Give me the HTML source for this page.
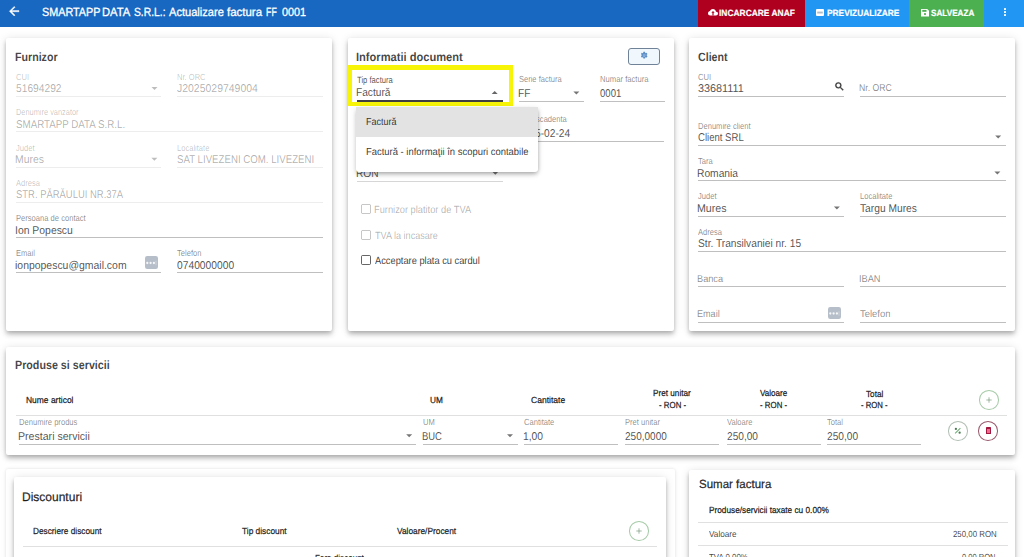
<!DOCTYPE html>
<html><head><meta charset="utf-8"><title>Actualizare factura</title>
<style>
html,body{margin:0;padding:0;width:1024px;height:557px;overflow:hidden;background:#fff;position:relative}
.t{position:absolute;font-family:'Liberation Sans', sans-serif;line-height:1;white-space:pre;text-rendering:geometricPrecision}
svg{position:absolute;overflow:visible}
</style></head><body>
<div style="position:absolute;left:0px;top:0px;width:1024px;height:27px;background:#1867c0"></div>
<div style="position:absolute;left:698px;top:0px;width:107px;height:27px;background:#b00020"></div>
<div style="position:absolute;left:805px;top:0px;width:104px;height:27px;background:#2196f3"></div>
<div style="position:absolute;left:909px;top:0px;width:75px;height:27px;background:#4caf50"></div>
<div style="position:absolute;left:984px;top:0px;width:40px;height:27px;background:#2196f3"></div>
<svg style="left:6.9px;top:4.2px" width="14.4" height="14.4" viewBox="0 0 24 24"><path fill="#fff" stroke="#fff" stroke-width=".7" d="M20 11H7.83l5.59-5.59L12 4l-8 8 8 8 1.41-1.41L7.83 13H20v-2z"/></svg>
<div class="t" style="left:41.80px;top:7px;font-size:11.9px;font-weight:400;-webkit-text-stroke-width:0.3px;color:#fff;transform:scaleX(0.9078);transform-origin:0 0;">SMARTAPP</div>
<div class="t" style="left:102.46px;top:7px;font-size:11.9px;font-weight:400;-webkit-text-stroke-width:0.3px;color:#fff;transform:scaleX(0.9414);transform-origin:0 0;">DATA</div>
<div class="t" style="left:133.70px;top:7px;font-size:11.9px;font-weight:400;-webkit-text-stroke-width:0.3px;color:#fff;transform:scaleX(0.8667);transform-origin:0 0;">S.R.L.:</div>
<div class="t" style="left:168.80px;top:7px;font-size:11.9px;font-weight:400;-webkit-text-stroke-width:0.3px;color:#fff;transform:scaleX(0.9322);transform-origin:0 0;">Actualizare</div>
<div class="t" style="left:227.00px;top:7px;font-size:11.9px;font-weight:400;-webkit-text-stroke-width:0.3px;color:#fff;transform:scaleX(0.9649);transform-origin:0 0;">factura</div>
<div class="t" style="left:266.46px;top:7px;font-size:11.9px;font-weight:400;-webkit-text-stroke-width:0.3px;color:#fff;transform:scaleX(0.7429);transform-origin:0 0;">FF</div>
<div class="t" style="left:282.20px;top:7px;font-size:11.9px;font-weight:400;-webkit-text-stroke-width:0.3px;color:#fff;transform:scaleX(0.9115);transform-origin:0 0;">0001</div>
<svg style="left:708px;top:9px" width="10" height="7" viewBox="0 0 10 7"><path d="M8.1 2.9C7.8 1.3 6.5 0 4.9 0 3.6 0 2.5.8 2 1.9.9 2 0 3 0 4.2 0 5.5 1 6.5 2.3 6.5H8c1.1 0 2-.9 2-2 0-1-.8-1.8-1.9-1.6z" fill="#fff"/><path d="M5 2L3.3 3.8h1.1v2.7h1.2V3.8h1.1z" fill="#b00020"/></svg>
<div class="t" style="left:719.00px;top:9px;font-size:9.0px;font-weight:700;-webkit-text-stroke-width:0.2px;color:#fff;transform:scaleX(0.9346);transform-origin:0 0;">INCARCARE ANAF</div>
<svg style="left:816px;top:9px" width="8" height="7" viewBox="0 0 8 7"><rect width="8" height="7" rx="1" fill="#fff"/><rect x="1.2" y="2.6" width="5.6" height="1.9" fill="#6d86a0" opacity=".55"/></svg>
<div class="t" style="left:826.50px;top:9px;font-size:9.0px;font-weight:700;-webkit-text-stroke-width:0.2px;color:#fff;transform:scaleX(0.9282);transform-origin:0 0;">PREVIZUALIZARE</div>
<svg style="left:920.5px;top:9px" width="8" height="7.5" viewBox="0 0 8 7.5"><path d="M0 0h6.2L8 1.8V7.5H0z" fill="#fff"/><rect x="1.3" y=".9" width="4.2" height="1.9" fill="#4caf50"/><circle cx="4" cy="5.1" r="1.1" fill="#4caf50"/></svg>
<div class="t" style="left:930.50px;top:9px;font-size:9.0px;font-weight:700;-webkit-text-stroke-width:0.2px;color:#fff;transform:scaleX(0.9062);transform-origin:0 0;">SALVEAZA</div>
<div style="position:absolute;left:1004px;top:8.2px;width:1.7px;height:1.7px;background:#fff;border-radius:50%"></div>
<div style="position:absolute;left:1004px;top:11.2px;width:1.7px;height:1.7px;background:#fff;border-radius:50%"></div>
<div style="position:absolute;left:1004px;top:14.2px;width:1.7px;height:1.7px;background:#fff;border-radius:50%"></div>
<div style="position:absolute;left:6px;top:38px;width:326px;height:293px;box-shadow:0 2px 4px -1px rgba(0,0,0,.2),0 4px 5px 0 rgba(0,0,0,.14),0 1px 10px 0 rgba(0,0,0,.12);background:#fff;border-radius:2px"></div>
<div style="position:absolute;left:348px;top:38px;width:326px;height:293px;box-shadow:0 2px 4px -1px rgba(0,0,0,.2),0 4px 5px 0 rgba(0,0,0,.14),0 1px 10px 0 rgba(0,0,0,.12);background:#fff;border-radius:2px"></div>
<div style="position:absolute;left:689px;top:38px;width:326px;height:293px;box-shadow:0 2px 4px -1px rgba(0,0,0,.2),0 4px 5px 0 rgba(0,0,0,.14),0 1px 10px 0 rgba(0,0,0,.12);background:#fff;border-radius:2px"></div>
<div style="position:absolute;left:6px;top:347px;width:1009px;height:107.5px;box-shadow:0 2px 4px -1px rgba(0,0,0,.2),0 4px 5px 0 rgba(0,0,0,.14),0 1px 10px 0 rgba(0,0,0,.12);background:#fff;border-radius:2px"></div>
<div style="position:absolute;left:6px;top:469px;width:669px;height:120px;background:#fff;border-radius:2px;box-shadow:0 0 3px rgba(0,0,0,.10),0 1px 6px rgba(0,0,0,.05)"></div>
<div style="position:absolute;left:14px;top:477px;width:652px;height:120px;box-shadow:0 2px 4px -1px rgba(0,0,0,.2),0 4px 5px 0 rgba(0,0,0,.14),0 1px 10px 0 rgba(0,0,0,.12);background:#fff;border-radius:2px"></div>
<div style="position:absolute;left:689px;top:470px;width:326px;height:120px;box-shadow:0 2px 4px -1px rgba(0,0,0,.2),0 4px 5px 0 rgba(0,0,0,.14),0 1px 10px 0 rgba(0,0,0,.12);background:#fff;border-radius:2px"></div>
<div class="t" style="left:14.91px;top:51px;font-size:12.0px;font-weight:700;color:rgba(0,0,0,.74);transform:scaleX(0.8872);transform-origin:0 0;">Furnizor</div>
<div class="t" style="left:15.80px;top:73px;font-size:8.8px;font-weight:400;color:rgba(0,0,0,.24);transform:scaleX(0.8600);transform-origin:0 0;">CUI</div>
<div class="t" style="left:15.80px;top:84px;font-size:11.3px;font-weight:400;color:rgba(0,0,0,.32);transform:scaleX(0.9060);transform-origin:0 0;">51694292</div>
<div style="position:absolute;left:16px;top:96px;width:145px;height:1px;background:rgba(0,0,0,.07)"></div>
<svg style="left:0;top:0" width="1" height="1"><path d="M151.5 86.9L157.5 86.9L154.5 89.9Z" fill="rgba(0,0,0,.26)"/></svg>
<div class="t" style="left:176.70px;top:73px;font-size:8.8px;font-weight:400;color:rgba(0,0,0,.24);transform:scaleX(0.8600);transform-origin:0 0;">Nr. ORC</div>
<div class="t" style="left:176.70px;top:84px;font-size:11.3px;font-weight:400;color:rgba(0,0,0,.32);transform:scaleX(0.9264);transform-origin:0 0;">J2025029749004</div>
<div style="position:absolute;left:177px;top:96px;width:146px;height:1px;background:rgba(0,0,0,.07)"></div>
<div class="t" style="left:15.80px;top:108px;font-size:8.8px;font-weight:400;color:rgba(0,0,0,.24);transform:scaleX(0.8413);transform-origin:0 0;">Denumire vanzator</div>
<div class="t" style="left:15.80px;top:120px;font-size:11.3px;font-weight:400;color:rgba(0,0,0,.32);transform:scaleX(0.8635);transform-origin:0 0;">SMARTAPP DATA S.R.L.</div>
<div style="position:absolute;left:16px;top:131px;width:307px;height:1px;background:rgba(0,0,0,.07)"></div>
<div class="t" style="left:15.80px;top:144px;font-size:8.8px;font-weight:400;color:rgba(0,0,0,.24);transform:scaleX(0.8600);transform-origin:0 0;">Judet</div>
<div class="t" style="left:14.88px;top:155px;font-size:11.3px;font-weight:400;color:rgba(0,0,0,.32);transform:scaleX(0.9233);transform-origin:0 0;">Mures</div>
<div style="position:absolute;left:16px;top:167px;width:145px;height:1px;background:rgba(0,0,0,.07)"></div>
<svg style="left:0;top:0" width="1" height="1"><path d="M151.4 157.8L157.4 157.8L154.4 160.8Z" fill="rgba(0,0,0,.26)"/></svg>
<div class="t" style="left:176.70px;top:144px;font-size:8.8px;font-weight:400;color:rgba(0,0,0,.24);transform:scaleX(0.8600);transform-origin:0 0;">Localitate</div>
<div class="t" style="left:176.70px;top:155px;font-size:11.3px;font-weight:400;color:rgba(0,0,0,.32);transform:scaleX(0.8562);transform-origin:0 0;">SAT LIVEZENI COM. LIVEZENI</div>
<div style="position:absolute;left:177px;top:167px;width:146px;height:1px;background:rgba(0,0,0,.07)"></div>
<div class="t" style="left:15.80px;top:179px;font-size:8.8px;font-weight:400;color:rgba(0,0,0,.24);transform:scaleX(0.8600);transform-origin:0 0;">Adresa</div>
<div class="t" style="left:15.80px;top:190px;font-size:11.3px;font-weight:400;color:rgba(0,0,0,.32);transform:scaleX(0.8359);transform-origin:0 0;">STR. PĂRĂULUI NR.37A</div>
<div style="position:absolute;left:16px;top:202px;width:307px;height:1px;background:rgba(0,0,0,.07)"></div>
<div class="t" style="left:15.80px;top:214px;font-size:8.8px;font-weight:400;color:rgba(0,0,0,.47);transform:scaleX(0.8630);transform-origin:0 0;">Persoana de contact</div>
<div class="t" style="left:14.88px;top:226px;font-size:11.3px;font-weight:400;color:rgba(0,0,0,.70);transform:scaleX(0.9213);transform-origin:0 0;">Ion Popescu</div>
<div style="position:absolute;left:16px;top:237px;width:307px;height:1px;background:rgba(0,0,0,.25)"></div>
<div class="t" style="left:15.80px;top:249px;font-size:8.8px;font-weight:400;color:rgba(0,0,0,.47);transform:scaleX(0.8600);transform-origin:0 0;">Email</div>
<div class="t" style="left:14.88px;top:261px;font-size:11.3px;font-weight:400;color:rgba(0,0,0,.70);transform:scaleX(0.9244);transform-origin:0 0;">ionpopescu@gmail.com</div>
<div style="position:absolute;left:16px;top:272px;width:145px;height:1px;background:rgba(0,0,0,.25)"></div>
<div class="t" style="left:176.70px;top:249px;font-size:8.8px;font-weight:400;color:rgba(0,0,0,.47);transform:scaleX(0.8600);transform-origin:0 0;">Telefon</div>
<div class="t" style="left:176.70px;top:261px;font-size:11.3px;font-weight:400;color:rgba(0,0,0,.70);transform:scaleX(0.9095);transform-origin:0 0;">0740000000</div>
<div style="position:absolute;left:177px;top:272px;width:146px;height:1px;background:rgba(0,0,0,.25)"></div>
<svg style="left:145px;top:256.4px" width="13" height="13" viewBox="0 0 13 13"><rect width="13" height="13" rx="2.2" fill="#b6bec9"/><circle cx="2.3" cy="7" r="1.15" fill="#f4f6f8"/><circle cx="5.6" cy="7" r="1.15" fill="#f4f6f8"/><circle cx="8.9" cy="7" r="1.15" fill="#f4f6f8"/><rect x="10.7" y="4.8" width=".6" height="4.4" fill="#dde2e8"/></svg>
<div class="t" style="left:356.07px;top:51px;font-size:12.0px;font-weight:700;color:rgba(0,0,0,.74);transform:scaleX(0.9254);transform-origin:0 0;">Informatii document</div>
<div style="position:absolute;left:628.3px;top:48px;width:31.4px;height:17.4px;border:1.2px solid #6f8297;border-radius:3px;box-sizing:border-box;background:#f1f8fd"></div>
<svg style="left:639.8px;top:51.4px" width="8.4" height="8.4" viewBox="0 0 24 24"><circle cx="12" cy="12" r="4" fill="#7da7d6"/><path fill="#5d8ec6" d="M19.14 12.94c.04-.3.06-.61.06-.94 0-.32-.02-.64-.07-.94l2.03-1.58a.49.49 0 0 0 .12-.61l-1.92-3.32a.488.488 0 0 0-.59-.22l-2.39.96c-.5-.38-1.03-.7-1.62-.94l-.36-2.54a.484.484 0 0 0-.48-.41h-3.84c-.24 0-.43.17-.47.41l-.36 2.54c-.59.24-1.13.57-1.62.94l-2.39-.96c-.22-.08-.47 0-.59.22L2.74 8.87c-.12.21-.08.47.12.61l2.03 1.58c-.05.3-.09.63-.09.94s.02.64.07.94l-2.03 1.58a.49.49 0 0 0-.12.61l1.92 3.32c.12.22.37.29.59.22l2.39-.96c.5.38 1.03.7 1.62.94l.36 2.54c.05.24.24.41.48.41h3.84c.24 0 .44-.17.47-.41l.36-2.54c.59-.24 1.13-.56 1.62-.94l2.39.96c.22.08.47 0 .59-.22l1.92-3.32c.12-.22.07-.47-.12-.61l-2.01-1.58zM12 15.6c-1.98 0-3.6-1.62-3.6-3.6s1.62-3.6 3.6-3.6 3.6 1.62 3.6 3.6-1.62 3.6-3.6 3.6z"/></svg>
<div class="t" style="left:357.00px;top:115px;font-size:8.8px;font-weight:400;color:rgba(0,0,0,.47);transform:scaleX(0.8600);transform-origin:0 0;">Data emitere</div>
<div class="t" style="left:357.00px;top:129px;font-size:11.3px;font-weight:400;color:rgba(0,0,0,.70);transform:scaleX(0.9000);transform-origin:0 0;">2025-02-10</div>
<div style="position:absolute;left:357px;top:141px;width:146px;height:1px;background:rgba(0,0,0,.25)"></div>
<div class="t" style="left:518.40px;top:115px;font-size:8.8px;font-weight:400;color:rgba(0,0,0,.47);transform:scaleX(0.8600);transform-origin:0 0;">Data scadenta</div>
<div class="t" style="left:518.40px;top:129px;font-size:11.3px;font-weight:400;color:rgba(0,0,0,.70);transform:scaleX(0.9018);transform-origin:0 0;">2025-02-24</div>
<div style="position:absolute;left:518px;top:141px;width:146px;height:1px;background:rgba(0,0,0,.25)"></div>
<div class="t" style="left:357.00px;top:156px;font-size:8.8px;font-weight:400;color:rgba(0,0,0,.47);transform:scaleX(0.8600);transform-origin:0 0;">Moneda</div>
<div class="t" style="left:356.10px;top:169px;font-size:11.3px;font-weight:400;color:rgba(0,0,0,.70);transform:scaleX(0.9000);transform-origin:0 0;">RON</div>
<div style="position:absolute;left:357px;top:181px;width:146px;height:1px;background:rgba(0,0,0,.16)"></div>
<svg style="left:0;top:0" width="1" height="1"><path d="M492.3 171.7L498.3 171.7L495.3 174.7Z" fill="rgba(0,0,0,.54)"/></svg>
<div class="t" style="left:518.60px;top:75px;font-size:8.8px;font-weight:400;color:rgba(0,0,0,.47);transform:scaleX(0.8540);transform-origin:0 0;">Serie factura</div>
<div class="t" style="left:517.70px;top:89px;font-size:11.3px;font-weight:400;color:rgba(0,0,0,.70);transform:scaleX(0.9000);transform-origin:0 0;">FF</div>
<div style="position:absolute;left:519px;top:101px;width:65px;height:1px;background:rgba(0,0,0,.25)"></div>
<svg style="left:0;top:0" width="1" height="1"><path d="M573.4 91.4L579.4 91.4L576.4 94.4Z" fill="rgba(0,0,0,.54)"/></svg>
<div class="t" style="left:599.80px;top:75px;font-size:8.8px;font-weight:400;color:rgba(0,0,0,.47);transform:scaleX(0.8714);transform-origin:0 0;">Numar factura</div>
<div class="t" style="left:599.80px;top:89px;font-size:11.3px;font-weight:400;color:rgba(0,0,0,.70);transform:scaleX(0.8480);transform-origin:0 0;">0001</div>
<div style="position:absolute;left:600px;top:101px;width:65px;height:1px;background:rgba(0,0,0,.25)"></div>
<div class="t" style="left:357.00px;top:76px;font-size:9.2px;font-weight:400;color:rgba(0,0,0,.7);transform:scaleX(0.8326);transform-origin:0 0;">Tip factura</div>
<div class="t" style="left:356.10px;top:88px;font-size:11.3px;font-weight:400;color:rgba(0,0,0,.70);transform:scaleX(0.9000);transform-origin:0 0;">Factură</div>
<div style="position:absolute;left:357px;top:100px;width:146px;height:2px;background:rgba(0,0,0,.75)"></div>
<svg style="left:0;top:0" width="1" height="1"><path d="M491.7 93.9L497.7 93.9L494.7 90.9Z" fill="rgba(0,0,0,.6)"/></svg>
<div style="position:absolute;left:347.5px;top:65px;width:165.5px;height:41.3px;border:4.4px solid #f7f408;border-top-width:5.2px;box-sizing:border-box"></div>
<div style="position:absolute;left:360.8px;top:204.3px;width:10px;height:10px;border:1.4px solid rgba(0,0,0,.22);border-radius:1.5px;box-sizing:border-box"></div>
<div class="t" style="left:373.71px;top:206px;font-size:10.4px;font-weight:400;color:rgba(0,0,0,.3);transform:scaleX(0.8926);transform-origin:0 0;">Furnizor platitor de TVA</div>
<div style="position:absolute;left:360.8px;top:229.7px;width:10px;height:10px;border:1.4px solid rgba(0,0,0,.22);border-radius:1.5px;box-sizing:border-box"></div>
<div class="t" style="left:374.60px;top:232px;font-size:10.4px;font-weight:400;color:rgba(0,0,0,.3);transform:scaleX(0.8736);transform-origin:0 0;">TVA la incasare</div>
<div style="position:absolute;left:360.8px;top:255.1px;width:10px;height:10px;border:1.4px solid rgba(0,0,0,.6);border-radius:1.5px;box-sizing:border-box"></div>
<div class="t" style="left:374.60px;top:257px;font-size:10.4px;font-weight:400;color:rgba(0,0,0,.78);transform:scaleX(0.8940);transform-origin:0 0;">Acceptare plata cu cardul</div>
<div style="position:absolute;left:356.1px;top:106.7px;width:182.3px;height:65.6px;background:#fff;border-radius:0 0 3px 3px;box-shadow:0 3px 4px -1px rgba(0,0,0,.22),0 2px 6px 0 rgba(0,0,0,.12),2px 1px 4px -2px rgba(0,0,0,.15)"></div>
<div style="position:absolute;left:356.1px;top:106.7px;width:182.3px;height:30px;background:#e3e3e3"></div>
<div class="t" style="left:365.62px;top:118px;font-size:10.2px;font-weight:400;color:rgba(0,0,0,.8);transform:scaleX(0.8824);transform-origin:0 0;">Factură</div>
<div class="t" style="left:365.57px;top:148px;font-size:10.2px;font-weight:400;color:rgba(0,0,0,.8);transform:scaleX(0.9259);transform-origin:0 0;">Factură - informaţii în scopuri contabile</div>
<div class="t" style="left:698.20px;top:51px;font-size:12.0px;font-weight:700;color:rgba(0,0,0,.74);transform:scaleX(0.8879);transform-origin:0 0;">Client</div>
<div class="t" style="left:698.20px;top:73px;font-size:8.8px;font-weight:400;color:rgba(0,0,0,.47);transform:scaleX(0.8600);transform-origin:0 0;">CUI</div>
<div class="t" style="left:698.20px;top:84px;font-size:11.3px;font-weight:400;color:rgba(0,0,0,.70);transform:scaleX(0.9596);transform-origin:0 0;">33681111</div>
<div style="position:absolute;left:698px;top:96px;width:146px;height:1px;background:rgba(0,0,0,.25)"></div>
<svg style="left:833.5px;top:80.5px" width="11" height="11" viewBox="0 0 24 24"><path fill="rgba(0,0,0,.72)" stroke="rgba(0,0,0,.72)" stroke-width="1" d="M15.5 14h-.79l-.28-.27A6.471 6.471 0 0 0 16 9.5 6.5 6.5 0 1 0 9.5 16c1.61 0 3.09-.59 4.23-1.57l.27.28v.79l5 4.99L20.49 19l-4.99-5zm-6 0C7.01 14 5 11.99 5 9.5S7.01 5 9.5 5 14 7.01 14 9.5 11.99 14 9.5 14z"/></svg>
<div class="t" style="left:858.74px;top:84px;font-size:10.0px;font-weight:400;color:rgba(0,0,0,.47);transform:scaleX(0.8639);transform-origin:0 0;">Nr. ORC</div>
<div style="position:absolute;left:860px;top:96px;width:146px;height:1px;background:rgba(0,0,0,.25)"></div>
<div class="t" style="left:698.20px;top:122px;font-size:8.8px;font-weight:400;color:rgba(0,0,0,.47);transform:scaleX(0.8600);transform-origin:0 0;">Denumire client</div>
<div class="t" style="left:698.20px;top:133px;font-size:11.3px;font-weight:400;color:rgba(0,0,0,.70);transform:scaleX(0.8463);transform-origin:0 0;">Client SRL</div>
<div style="position:absolute;left:698px;top:145px;width:308px;height:1px;background:rgba(0,0,0,.25)"></div>
<svg style="left:0;top:0" width="1" height="1"><path d="M995.2 135.5L1001.2 135.5L998.2 138.5Z" fill="rgba(0,0,0,.54)"/></svg>
<div class="t" style="left:698.20px;top:157px;font-size:8.8px;font-weight:400;color:rgba(0,0,0,.47);transform:scaleX(0.8600);transform-origin:0 0;">Tara</div>
<div class="t" style="left:697.29px;top:169px;font-size:11.3px;font-weight:400;color:rgba(0,0,0,.70);transform:scaleX(0.9068);transform-origin:0 0;">Romania</div>
<div style="position:absolute;left:698px;top:180px;width:308px;height:1px;background:rgba(0,0,0,.25)"></div>
<svg style="left:0;top:0" width="1" height="1"><path d="M994.4 171.5L1000.4 171.5L997.4 174.5Z" fill="rgba(0,0,0,.54)"/></svg>
<div class="t" style="left:698.20px;top:192px;font-size:8.8px;font-weight:400;color:rgba(0,0,0,.47);transform:scaleX(0.8600);transform-origin:0 0;">Judet</div>
<div class="t" style="left:697.26px;top:204px;font-size:11.3px;font-weight:400;color:rgba(0,0,0,.70);transform:scaleX(0.9400);transform-origin:0 0;">Mures</div>
<div style="position:absolute;left:698px;top:216px;width:146px;height:1px;background:rgba(0,0,0,.25)"></div>
<svg style="left:0;top:0" width="1" height="1"><path d="M833.9 206.5L839.9 206.5L836.9 209.5Z" fill="rgba(0,0,0,.54)"/></svg>
<div class="t" style="left:859.70px;top:192px;font-size:8.8px;font-weight:400;color:rgba(0,0,0,.47);transform:scaleX(0.8600);transform-origin:0 0;">Localitate</div>
<div class="t" style="left:859.70px;top:204px;font-size:11.3px;font-weight:400;color:rgba(0,0,0,.70);transform:scaleX(0.9063);transform-origin:0 0;">Targu Mures</div>
<div style="position:absolute;left:860px;top:216px;width:146px;height:1px;background:rgba(0,0,0,.25)"></div>
<div class="t" style="left:698.20px;top:228px;font-size:8.8px;font-weight:400;color:rgba(0,0,0,.47);transform:scaleX(0.8600);transform-origin:0 0;">Adresa</div>
<div class="t" style="left:698.20px;top:239px;font-size:11.3px;font-weight:400;color:rgba(0,0,0,.70);transform:scaleX(0.9018);transform-origin:0 0;">Str. Transilvaniei nr. 15</div>
<div style="position:absolute;left:698px;top:251px;width:308px;height:1px;background:rgba(0,0,0,.25)"></div>
<div class="t" style="left:697.28px;top:275px;font-size:10.0px;font-weight:400;color:rgba(0,0,0,.47);transform:scaleX(0.9185);transform-origin:0 0;">Banca</div>
<div style="position:absolute;left:698px;top:286px;width:146px;height:1px;background:rgba(0,0,0,.25)"></div>
<div class="t" style="left:858.78px;top:275px;font-size:10.0px;font-weight:400;color:rgba(0,0,0,.47);transform:scaleX(0.9227);transform-origin:0 0;">IBAN</div>
<div style="position:absolute;left:860px;top:286px;width:146px;height:1px;background:rgba(0,0,0,.25)"></div>
<div class="t" style="left:697.29px;top:310px;font-size:10.0px;font-weight:400;color:rgba(0,0,0,.47);transform:scaleX(0.9083);transform-origin:0 0;">Email</div>
<div style="position:absolute;left:698px;top:322px;width:146px;height:1px;background:rgba(0,0,0,.25)"></div>
<div class="t" style="left:859.70px;top:310px;font-size:10.0px;font-weight:400;color:rgba(0,0,0,.47);transform:scaleX(0.9469);transform-origin:0 0;">Telefon</div>
<div style="position:absolute;left:860px;top:322px;width:146px;height:1px;background:rgba(0,0,0,.25)"></div>
<svg style="left:827.8px;top:306.6px" width="13" height="12" viewBox="0 0 13 12"><rect width="13" height="12" rx="2.2" fill="#b6bec9"/><circle cx="2.3" cy="6.5" r="1.15" fill="#f4f6f8"/><circle cx="5.6" cy="6.5" r="1.15" fill="#f4f6f8"/><circle cx="8.9" cy="6.5" r="1.15" fill="#f4f6f8"/><rect x="10.7" y="4.3" width=".6" height="4.4" fill="#dde2e8"/></svg>
<div class="t" style="left:15.31px;top:359px;font-size:12.0px;font-weight:700;color:rgba(0,0,0,.74);transform:scaleX(0.8933);transform-origin:0 0;">Produse si servicii</div>
<div class="t" style="left:25.80px;top:396px;font-size:8.8px;font-weight:400;-webkit-text-stroke-width:0.3px;color:rgba(0,0,0,.82);transform:scaleX(0.9612);transform-origin:0 0;">Nume articol</div>
<div class="t" style="left:429.80px;top:396px;font-size:8.8px;font-weight:400;-webkit-text-stroke-width:0.3px;color:rgba(0,0,0,.82);transform:scaleX(0.9385);transform-origin:0 0;">UM</div>
<div class="t" style="left:530.60px;top:396px;font-size:8.8px;font-weight:400;-webkit-text-stroke-width:0.3px;color:rgba(0,0,0,.82);transform:scaleX(0.9714);transform-origin:0 0;">Cantitate</div>
<div class="t" style="left:653.30px;top:389px;font-size:8.8px;font-weight:400;-webkit-text-stroke-width:0.3px;color:rgba(0,0,0,.82);transform:scaleX(0.9317);transform-origin:0 0;">Pret unitar</div>
<div class="t" style="left:658.70px;top:401px;font-size:8.8px;font-weight:400;-webkit-text-stroke-width:0.3px;color:rgba(0,0,0,.82);transform:scaleX(0.8967);transform-origin:0 0;">- RON -</div>
<div class="t" style="left:760.00px;top:389px;font-size:8.8px;font-weight:400;-webkit-text-stroke-width:0.3px;color:rgba(0,0,0,.82);transform:scaleX(0.9200);transform-origin:0 0;">Valoare</div>
<div class="t" style="left:760.30px;top:401px;font-size:8.8px;font-weight:400;-webkit-text-stroke-width:0.3px;color:rgba(0,0,0,.82);transform:scaleX(0.8967);transform-origin:0 0;">- RON -</div>
<div class="t" style="left:866.00px;top:390px;font-size:8.8px;font-weight:400;-webkit-text-stroke-width:0.3px;color:rgba(0,0,0,.82);transform:scaleX(0.9316);transform-origin:0 0;">Total</div>
<div class="t" style="left:861.20px;top:401px;font-size:8.8px;font-weight:400;-webkit-text-stroke-width:0.3px;color:rgba(0,0,0,.82);transform:scaleX(0.8800);transform-origin:0 0;">- RON -</div>
<div style="position:absolute;left:16px;top:415px;width:991px;height:1px;background:rgba(0,0,0,.12)"></div>
<div class="t" style="left:18.60px;top:418px;font-size:8.8px;font-weight:400;color:rgba(0,0,0,.47);transform:scaleX(0.8657);transform-origin:0 0;">Denumire produs</div>
<div class="t" style="left:17.66px;top:432px;font-size:11.3px;font-weight:400;color:rgba(0,0,0,.70);transform:scaleX(0.9373);transform-origin:0 0;">Prestari servicii</div>
<div style="position:absolute;left:19px;top:444px;width:397px;height:1px;background:rgba(0,0,0,.25)"></div>
<svg style="left:0;top:0" width="1" height="1"><path d="M406.2 434.3L412.2 434.3L409.2 437.3Z" fill="rgba(0,0,0,.54)"/></svg>
<div class="t" style="left:422.80px;top:418px;font-size:8.8px;font-weight:400;color:rgba(0,0,0,.47);transform:scaleX(0.8600);transform-origin:0 0;">UM</div>
<div class="t" style="left:421.97px;top:432px;font-size:11.3px;font-weight:400;color:rgba(0,0,0,.70);transform:scaleX(0.8348);transform-origin:0 0;">BUC</div>
<div style="position:absolute;left:423px;top:444px;width:95px;height:1px;background:rgba(0,0,0,.25)"></div>
<svg style="left:0;top:0" width="1" height="1"><path d="M507.0 434.3L513.0 434.3L510.0 437.3Z" fill="rgba(0,0,0,.54)"/></svg>
<div class="t" style="left:524.30px;top:418px;font-size:8.8px;font-weight:400;color:rgba(0,0,0,.47);transform:scaleX(0.8600);transform-origin:0 0;">Cantitate</div>
<div class="t" style="left:523.39px;top:432px;font-size:11.3px;font-weight:400;color:rgba(0,0,0,.70);transform:scaleX(0.9143);transform-origin:0 0;">1,00</div>
<div style="position:absolute;left:524px;top:444px;width:94px;height:1px;background:rgba(0,0,0,.25)"></div>
<div class="t" style="left:625.20px;top:418px;font-size:8.8px;font-weight:400;color:rgba(0,0,0,.47);transform:scaleX(0.8600);transform-origin:0 0;">Pret unitar</div>
<div class="t" style="left:625.20px;top:432px;font-size:11.3px;font-weight:400;color:rgba(0,0,0,.70);transform:scaleX(0.8872);transform-origin:0 0;">250,0000</div>
<div style="position:absolute;left:625px;top:444px;width:94px;height:1px;background:rgba(0,0,0,.25)"></div>
<div class="t" style="left:726.60px;top:418px;font-size:8.8px;font-weight:400;color:rgba(0,0,0,.47);transform:scaleX(0.8600);transform-origin:0 0;">Valoare</div>
<div class="t" style="left:726.60px;top:432px;font-size:11.3px;font-weight:400;color:rgba(0,0,0,.70);transform:scaleX(0.8971);transform-origin:0 0;">250,00</div>
<div style="position:absolute;left:727px;top:444px;width:94px;height:1px;background:rgba(0,0,0,.25)"></div>
<div class="t" style="left:827.40px;top:418px;font-size:8.8px;font-weight:400;color:rgba(0,0,0,.47);transform:scaleX(0.8600);transform-origin:0 0;">Total</div>
<div class="t" style="left:827.40px;top:432px;font-size:11.3px;font-weight:400;color:rgba(0,0,0,.70);transform:scaleX(0.9000);transform-origin:0 0;">250,00</div>
<div style="position:absolute;left:827px;top:444px;width:94px;height:1px;background:rgba(0,0,0,.25)"></div>
<div style="position:absolute;left:978.5px;top:389.8px;width:20.4px;height:20px;border:1px solid rgba(76,150,80,.5);border-radius:50%;box-sizing:border-box"></div>
<svg style="left:985.7px;top:396.8px" width="6" height="6" viewBox="0 0 6 6"><path d="M3 0.3v5.4M0.3 3h5.4" stroke="#7a9a7c" stroke-width=".7"/></svg>
<div style="position:absolute;left:947.5px;top:420.8px;width:20.4px;height:20px;border:1px solid rgba(70,100,75,.42);border-radius:50%;box-sizing:border-box"></div>
<svg style="left:954px;top:427px" width="7.5" height="7.5" viewBox="0 0 8 8"><circle cx="2" cy="2" r="1.2" fill="#4f7a55"/><circle cx="6" cy="6" r="1.2" fill="#4f7a55"/><path d="M6.8 1.2L1.2 6.8" stroke="#6fae74" stroke-width="1.2"/></svg>
<div style="position:absolute;left:978.0999999999999px;top:420.8px;width:20.4px;height:20px;border:1px solid rgba(125,45,70,.8);border-radius:50%;box-sizing:border-box"></div>
<div style="position:absolute;left:985.6px;top:427.3px;width:5.4px;height:6.8px;background:#a3173f;border-radius:.6px"></div>
<div style="position:absolute;left:987px;top:428.7px;width:2.6px;height:4px;background:#f06a90"></div>
<div class="t" style="left:22.41px;top:491px;font-size:12.2px;font-weight:400;-webkit-text-stroke-width:0.3px;color:rgba(0,0,0,.82);transform:scaleX(0.9850);transform-origin:0 0;">Discounturi</div>
<div class="t" style="left:33.30px;top:527px;font-size:8.8px;font-weight:400;-webkit-text-stroke-width:0.3px;color:rgba(0,0,0,.8);transform:scaleX(0.9411);transform-origin:0 0;">Descriere discount</div>
<div class="t" style="left:242.30px;top:527px;font-size:8.8px;font-weight:400;-webkit-text-stroke-width:0.3px;color:rgba(0,0,0,.8);transform:scaleX(0.9479);transform-origin:0 0;">Tip discount</div>
<div class="t" style="left:396.50px;top:527px;font-size:8.8px;font-weight:400;-webkit-text-stroke-width:0.3px;color:rgba(0,0,0,.8);transform:scaleX(0.9476);transform-origin:0 0;">Valoare/Procent</div>
<div style="position:absolute;left:629.0999999999999px;top:520.8px;width:20.4px;height:20px;border:1px solid rgba(76,150,80,.5);border-radius:50%;box-sizing:border-box"></div>
<svg style="left:636.3px;top:527.8px" width="6" height="6" viewBox="0 0 6 6"><path d="M3 0.3v5.4M0.3 3h5.4" stroke="#7a9a7c" stroke-width=".7"/></svg>
<div style="position:absolute;left:23px;top:546px;width:634px;height:1px;background:rgba(0,0,0,.12)"></div>
<div class="t" style="left:315.20px;top:554px;font-size:8.8px;font-weight:400;-webkit-text-stroke-width:0.3px;color:rgba(0,0,0,.8);transform:scaleX(0.9167);transform-origin:0 0;">Fara discount</div>
<div class="t" style="left:698.50px;top:479px;font-size:11.8px;font-weight:400;-webkit-text-stroke-width:0.3px;color:rgba(0,0,0,.82);transform:scaleX(0.9760);transform-origin:0 0;">Sumar factura</div>
<div class="t" style="left:708.50px;top:506px;font-size:8.8px;font-weight:400;-webkit-text-stroke-width:0.3px;color:rgba(0,0,0,.82);transform:scaleX(0.9398);transform-origin:0 0;">Produse/servicii taxate cu 0.00%</div>
<div style="position:absolute;left:698px;top:522px;width:310px;height:1px;background:rgba(0,0,0,.12)"></div>
<div class="t" style="left:708.50px;top:530px;font-size:8.8px;font-weight:400;color:rgba(0,0,0,.75);transform:scaleX(0.9276);transform-origin:0 0;">Valoare</div>
<div class="t" style="left:952.80px;top:530px;font-size:8.8px;font-weight:400;color:rgba(0,0,0,.75);transform:scaleX(0.8938);transform-origin:0 0;">250,00 RON</div>
<div style="position:absolute;left:698px;top:545px;width:310px;height:1px;background:rgba(0,0,0,.12)"></div>
<div class="t" style="left:708.50px;top:553px;font-size:8.8px;font-weight:400;color:rgba(0,0,0,.75);transform:scaleX(0.8953);transform-origin:0 0;">TVA 0.00%</div>
<div class="t" style="left:962.30px;top:553px;font-size:8.8px;font-weight:400;color:rgba(0,0,0,.75);transform:scaleX(0.8564);transform-origin:0 0;">0,00 RON</div>
</body></html>
